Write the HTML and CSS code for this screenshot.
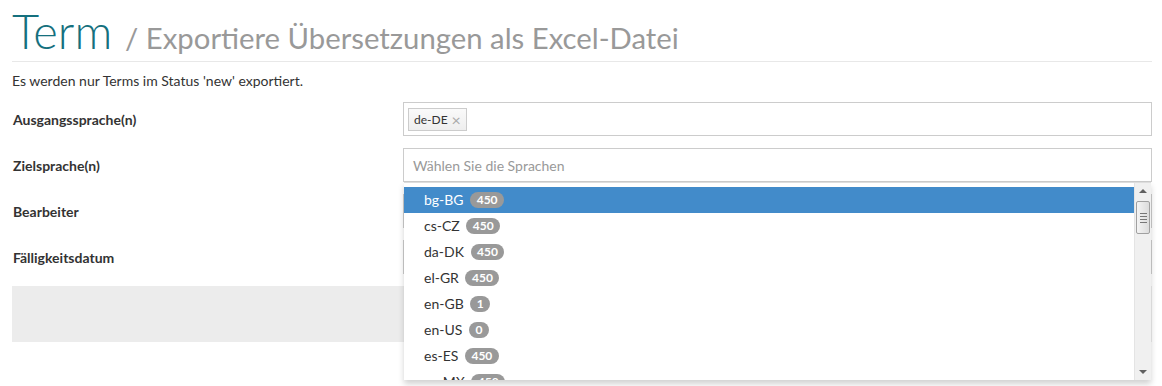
FILE: index.html
```html
<!DOCTYPE html>
<html lang="de">

<head>
  <meta charset="UTF-8">
  <title>Term - Export</title>
  <link rel="stylesheet" href="styles.css">
</head>

<body>
  <div class="page">
    <h1 class="page-title">Term <small>/ Exportiere Übersetzungen als Excel-Datei</small></h1>
    <p class="hint">Es werden nur Terms im Status 'new' exportiert.</p>

    <form class="export-form">
      <label class="form-label">Ausgangssprache(n)</label>
      <div class="field">
        <div class="multi-input">
          <span class="tag">de-DE <span class="tag-remove">×</span></span>
        </div>
      </div>

      <label class="form-label">Zielsprache(n)</label>
      <div class="field">
        <div class="multi-input open">
          <span class="placeholder">Wählen Sie die Sprachen</span>
        </div>
        <div class="dropdown">
          <ul class="results">
            <li class="active">bg-BG <span class="badge">450</span></li>
            <li>cs-CZ <span class="badge">450</span></li>
            <li>da-DK <span class="badge">450</span></li>
            <li>el-GR <span class="badge">450</span></li>
            <li>en-GB <span class="badge">1</span></li>
            <li>en-US <span class="badge">0</span></li>
            <li>es-ES <span class="badge">450</span></li>
            <li>es-MX <span class="badge">450</span></li>
          </ul>
          <div class="scrollbar">
            <span class="arrow up"></span>
            <div class="track">
              <div class="thumb"><i></i><i></i><i></i><i></i></div>
            </div>
            <span class="arrow down"></span>
          </div>
        </div>
      </div>

      <label class="form-label">Bearbeiter</label>
      <div class="field">
        <div class="multi-input"></div>
      </div>

      <label class="form-label">Fälligkeitsdatum</label>
      <div class="field">
        <div class="multi-input"></div>
      </div>
    </form>

    <div class="form-actions"></div>
  </div>
</body>

</html>
```

FILE: styles.css
```css
* {
  box-sizing: border-box;
  margin: 0;
  padding: 0;
}

html,
body {
  min-height: 100vh;
  overflow: hidden;
}

body {
  font-family: 'Lato', 'Open Sans', sans-serif;
  font-size: 14px;
  color: #333;
  background: #fff;
}

.page {
  padding: 0 10px 0 12px;
}

.page-title {
  font-size: 47px;
  font-weight: 300;
  color: #15707e;
  line-height: 46px;
  padding: 8px 0 7px;
  border-bottom: 1px solid #e8e8e8;
}

.page-title small {
  font-size: 29.3px;
  font-weight: 400;
  line-height: 1;
  color: #999;
}

.hint {
  margin-top: 9px;
  line-height: 20px;
}

.export-form {
  display: grid;
  grid-template-columns: 391px 1fr;
  row-gap: 12px;
  margin-top: 11px;
  align-items: center;
}

.form-label {
  font-weight: 700;
  padding-left: 1px;
}

.field {
  position: relative;
}

.multi-input {
  height: 34px;
  border: 1px solid #ccc;
  background: #fff;
  padding: 5px 4px;
  display: flex;
  align-items: center;
}

.tag {
  display: inline-flex;
  align-items: center;
  gap: 4px;
  height: 23px;
  padding: 0 5px;
  font-size: 12px;
  color: #333;
  border: 1px solid #ccc;
  background: linear-gradient(#fafafa, #eee);
}

.tag-remove {
  color: #aaa;
  font-size: 16px;
}

.placeholder {
  color: #999;
  font-size: 14px;
  padding-left: 5px;
}

.dropdown {
  position: absolute;
  top: 100%;
  left: 1px;
  right: 1px;
  height: 198px;
  background: #fff;
  border-top: 1px solid #ddd;
  box-shadow: 0 4px 6px rgba(0, 0, 0, 0.18);
  display: flex;
  z-index: 5;
}

.results {
  list-style: none;
  flex: 1;
  overflow: hidden;
  padding-top: 4px;
}

.results li {
  height: 26px;
  line-height: 26px;
  padding-left: 20px;
  font-size: 14px;
  color: #333;
}

.results li.active {
  background: #428bca;
  color: #fff;
}

.badge {
  display: inline-block;
  margin-left: 3px;
  background: #999;
  color: #fff;
  font-size: 12px;
  font-weight: 700;
  line-height: 16px;
  padding: 0 6.5px;
  border-radius: 8px;
  vertical-align: 1px;
}

.scrollbar {
  width: 17px;
  background: #f0f0f0;
  border-left: 1px solid #e4e4e4;
  display: flex;
  flex-direction: column;
  align-items: center;
}

.arrow {
  width: 0;
  height: 0;
  border-left: 4px solid transparent;
  border-right: 4px solid transparent;
  margin: 6px 0;
}

.arrow.up {
  border-bottom: 4px solid #606060;
}

.arrow.down {
  border-top: 4px solid #606060;
}

.track {
  flex: 1;
  width: 100%;
}

.thumb {
  margin: 2px 1px 0;
  height: 33px;
  border: 1px solid #a0a0a0;
  border-radius: 2px;
  background: linear-gradient(90deg, #f4f4f4, #dcdcdc);
  display: flex;
  flex-direction: column;
  justify-content: center;
  align-items: center;
  gap: 2px;
}

.thumb i {
  display: block;
  width: 7px;
  height: 1px;
  background: #777;
}

.form-actions {
  margin-top: 12px;
  height: 56px;
  background: #ececec;
}
```
